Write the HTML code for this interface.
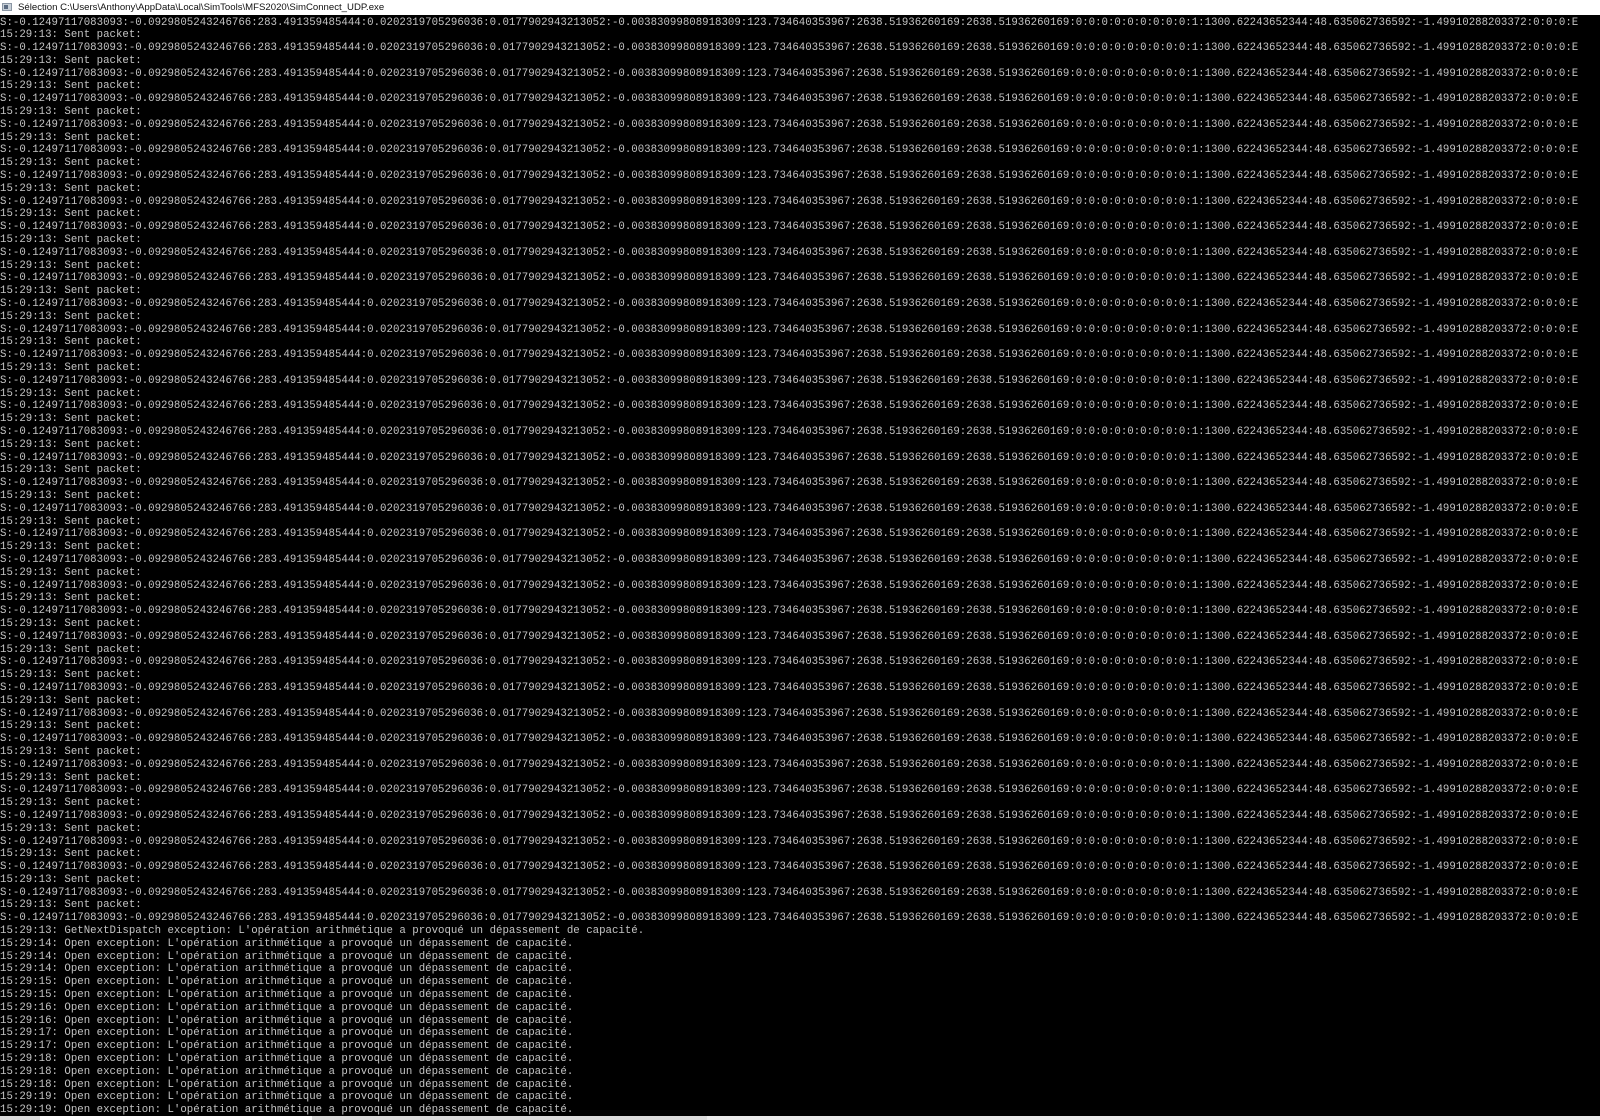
<!DOCTYPE html>
<html><head><meta charset="utf-8"><style>
html,body{margin:0;padding:0;width:1600px;height:1120px;overflow:hidden;background:#000;}
#title{position:absolute;left:0;top:0;width:1600px;height:15px;background:#fff;font-family:"Liberation Sans",sans-serif;font-size:9.6px;line-height:15px;color:#111;white-space:nowrap;}
#title .ic{position:absolute;left:2px;top:3px;width:10px;height:8px;background:#c8d0d8;border:1px solid #8a96a4;box-sizing:border-box;}
#title .ic:before{content:"";position:absolute;left:1px;top:1px;width:4px;height:4px;background:#5a6a80;}
#title span{position:absolute;left:18px;top:0;}
#con{position:absolute;left:0;top:16.5px;margin:0;font-family:"Liberation Mono",monospace;font-size:10.74px;line-height:12.8px;color:#c4c4c4;white-space:pre;}
#bot{position:absolute;left:0;top:1116px;width:1600px;height:4px;background:#dcdcdc;}
#bot i{position:absolute;left:40px;top:0;width:272px;height:4px;background:#fff;}
#bot b{position:absolute;left:707px;top:0;width:893px;height:4px;background:#ececec;}
</style></head><body>
<div id="title"><div class="ic"></div><span>Sélection C:\Users\Anthony\AppData\Local\SimTools\MFS2020\SimConnect_UDP.exe</span></div>
<pre id="con">S:-0.12497117083093:-0.0929805243246766:283.491359485444:0.0202319705296036:0.0177902943213052:-0.00383099808918309:123.734640353967:2638.51936260169:2638.51936260169:0:0:0:0:0:0:0:0:0:1:1300.62243652344:48.635062736592:-1.49910288203372:0:0:0:E
15:29:13: Sent packet:
S:-0.12497117083093:-0.0929805243246766:283.491359485444:0.0202319705296036:0.0177902943213052:-0.00383099808918309:123.734640353967:2638.51936260169:2638.51936260169:0:0:0:0:0:0:0:0:0:1:1300.62243652344:48.635062736592:-1.49910288203372:0:0:0:E
15:29:13: Sent packet:
S:-0.12497117083093:-0.0929805243246766:283.491359485444:0.0202319705296036:0.0177902943213052:-0.00383099808918309:123.734640353967:2638.51936260169:2638.51936260169:0:0:0:0:0:0:0:0:0:1:1300.62243652344:48.635062736592:-1.49910288203372:0:0:0:E
15:29:13: Sent packet:
S:-0.12497117083093:-0.0929805243246766:283.491359485444:0.0202319705296036:0.0177902943213052:-0.00383099808918309:123.734640353967:2638.51936260169:2638.51936260169:0:0:0:0:0:0:0:0:0:1:1300.62243652344:48.635062736592:-1.49910288203372:0:0:0:E
15:29:13: Sent packet:
S:-0.12497117083093:-0.0929805243246766:283.491359485444:0.0202319705296036:0.0177902943213052:-0.00383099808918309:123.734640353967:2638.51936260169:2638.51936260169:0:0:0:0:0:0:0:0:0:1:1300.62243652344:48.635062736592:-1.49910288203372:0:0:0:E
15:29:13: Sent packet:
S:-0.12497117083093:-0.0929805243246766:283.491359485444:0.0202319705296036:0.0177902943213052:-0.00383099808918309:123.734640353967:2638.51936260169:2638.51936260169:0:0:0:0:0:0:0:0:0:1:1300.62243652344:48.635062736592:-1.49910288203372:0:0:0:E
15:29:13: Sent packet:
S:-0.12497117083093:-0.0929805243246766:283.491359485444:0.0202319705296036:0.0177902943213052:-0.00383099808918309:123.734640353967:2638.51936260169:2638.51936260169:0:0:0:0:0:0:0:0:0:1:1300.62243652344:48.635062736592:-1.49910288203372:0:0:0:E
15:29:13: Sent packet:
S:-0.12497117083093:-0.0929805243246766:283.491359485444:0.0202319705296036:0.0177902943213052:-0.00383099808918309:123.734640353967:2638.51936260169:2638.51936260169:0:0:0:0:0:0:0:0:0:1:1300.62243652344:48.635062736592:-1.49910288203372:0:0:0:E
15:29:13: Sent packet:
S:-0.12497117083093:-0.0929805243246766:283.491359485444:0.0202319705296036:0.0177902943213052:-0.00383099808918309:123.734640353967:2638.51936260169:2638.51936260169:0:0:0:0:0:0:0:0:0:1:1300.62243652344:48.635062736592:-1.49910288203372:0:0:0:E
15:29:13: Sent packet:
S:-0.12497117083093:-0.0929805243246766:283.491359485444:0.0202319705296036:0.0177902943213052:-0.00383099808918309:123.734640353967:2638.51936260169:2638.51936260169:0:0:0:0:0:0:0:0:0:1:1300.62243652344:48.635062736592:-1.49910288203372:0:0:0:E
15:29:13: Sent packet:
S:-0.12497117083093:-0.0929805243246766:283.491359485444:0.0202319705296036:0.0177902943213052:-0.00383099808918309:123.734640353967:2638.51936260169:2638.51936260169:0:0:0:0:0:0:0:0:0:1:1300.62243652344:48.635062736592:-1.49910288203372:0:0:0:E
15:29:13: Sent packet:
S:-0.12497117083093:-0.0929805243246766:283.491359485444:0.0202319705296036:0.0177902943213052:-0.00383099808918309:123.734640353967:2638.51936260169:2638.51936260169:0:0:0:0:0:0:0:0:0:1:1300.62243652344:48.635062736592:-1.49910288203372:0:0:0:E
15:29:13: Sent packet:
S:-0.12497117083093:-0.0929805243246766:283.491359485444:0.0202319705296036:0.0177902943213052:-0.00383099808918309:123.734640353967:2638.51936260169:2638.51936260169:0:0:0:0:0:0:0:0:0:1:1300.62243652344:48.635062736592:-1.49910288203372:0:0:0:E
15:29:13: Sent packet:
S:-0.12497117083093:-0.0929805243246766:283.491359485444:0.0202319705296036:0.0177902943213052:-0.00383099808918309:123.734640353967:2638.51936260169:2638.51936260169:0:0:0:0:0:0:0:0:0:1:1300.62243652344:48.635062736592:-1.49910288203372:0:0:0:E
15:29:13: Sent packet:
S:-0.12497117083093:-0.0929805243246766:283.491359485444:0.0202319705296036:0.0177902943213052:-0.00383099808918309:123.734640353967:2638.51936260169:2638.51936260169:0:0:0:0:0:0:0:0:0:1:1300.62243652344:48.635062736592:-1.49910288203372:0:0:0:E
15:29:13: Sent packet:
S:-0.12497117083093:-0.0929805243246766:283.491359485444:0.0202319705296036:0.0177902943213052:-0.00383099808918309:123.734640353967:2638.51936260169:2638.51936260169:0:0:0:0:0:0:0:0:0:1:1300.62243652344:48.635062736592:-1.49910288203372:0:0:0:E
15:29:13: Sent packet:
S:-0.12497117083093:-0.0929805243246766:283.491359485444:0.0202319705296036:0.0177902943213052:-0.00383099808918309:123.734640353967:2638.51936260169:2638.51936260169:0:0:0:0:0:0:0:0:0:1:1300.62243652344:48.635062736592:-1.49910288203372:0:0:0:E
15:29:13: Sent packet:
S:-0.12497117083093:-0.0929805243246766:283.491359485444:0.0202319705296036:0.0177902943213052:-0.00383099808918309:123.734640353967:2638.51936260169:2638.51936260169:0:0:0:0:0:0:0:0:0:1:1300.62243652344:48.635062736592:-1.49910288203372:0:0:0:E
15:29:13: Sent packet:
S:-0.12497117083093:-0.0929805243246766:283.491359485444:0.0202319705296036:0.0177902943213052:-0.00383099808918309:123.734640353967:2638.51936260169:2638.51936260169:0:0:0:0:0:0:0:0:0:1:1300.62243652344:48.635062736592:-1.49910288203372:0:0:0:E
15:29:13: Sent packet:
S:-0.12497117083093:-0.0929805243246766:283.491359485444:0.0202319705296036:0.0177902943213052:-0.00383099808918309:123.734640353967:2638.51936260169:2638.51936260169:0:0:0:0:0:0:0:0:0:1:1300.62243652344:48.635062736592:-1.49910288203372:0:0:0:E
15:29:13: Sent packet:
S:-0.12497117083093:-0.0929805243246766:283.491359485444:0.0202319705296036:0.0177902943213052:-0.00383099808918309:123.734640353967:2638.51936260169:2638.51936260169:0:0:0:0:0:0:0:0:0:1:1300.62243652344:48.635062736592:-1.49910288203372:0:0:0:E
15:29:13: Sent packet:
S:-0.12497117083093:-0.0929805243246766:283.491359485444:0.0202319705296036:0.0177902943213052:-0.00383099808918309:123.734640353967:2638.51936260169:2638.51936260169:0:0:0:0:0:0:0:0:0:1:1300.62243652344:48.635062736592:-1.49910288203372:0:0:0:E
15:29:13: Sent packet:
S:-0.12497117083093:-0.0929805243246766:283.491359485444:0.0202319705296036:0.0177902943213052:-0.00383099808918309:123.734640353967:2638.51936260169:2638.51936260169:0:0:0:0:0:0:0:0:0:1:1300.62243652344:48.635062736592:-1.49910288203372:0:0:0:E
15:29:13: Sent packet:
S:-0.12497117083093:-0.0929805243246766:283.491359485444:0.0202319705296036:0.0177902943213052:-0.00383099808918309:123.734640353967:2638.51936260169:2638.51936260169:0:0:0:0:0:0:0:0:0:1:1300.62243652344:48.635062736592:-1.49910288203372:0:0:0:E
15:29:13: Sent packet:
S:-0.12497117083093:-0.0929805243246766:283.491359485444:0.0202319705296036:0.0177902943213052:-0.00383099808918309:123.734640353967:2638.51936260169:2638.51936260169:0:0:0:0:0:0:0:0:0:1:1300.62243652344:48.635062736592:-1.49910288203372:0:0:0:E
15:29:13: Sent packet:
S:-0.12497117083093:-0.0929805243246766:283.491359485444:0.0202319705296036:0.0177902943213052:-0.00383099808918309:123.734640353967:2638.51936260169:2638.51936260169:0:0:0:0:0:0:0:0:0:1:1300.62243652344:48.635062736592:-1.49910288203372:0:0:0:E
15:29:13: Sent packet:
S:-0.12497117083093:-0.0929805243246766:283.491359485444:0.0202319705296036:0.0177902943213052:-0.00383099808918309:123.734640353967:2638.51936260169:2638.51936260169:0:0:0:0:0:0:0:0:0:1:1300.62243652344:48.635062736592:-1.49910288203372:0:0:0:E
15:29:13: Sent packet:
S:-0.12497117083093:-0.0929805243246766:283.491359485444:0.0202319705296036:0.0177902943213052:-0.00383099808918309:123.734640353967:2638.51936260169:2638.51936260169:0:0:0:0:0:0:0:0:0:1:1300.62243652344:48.635062736592:-1.49910288203372:0:0:0:E
15:29:13: Sent packet:
S:-0.12497117083093:-0.0929805243246766:283.491359485444:0.0202319705296036:0.0177902943213052:-0.00383099808918309:123.734640353967:2638.51936260169:2638.51936260169:0:0:0:0:0:0:0:0:0:1:1300.62243652344:48.635062736592:-1.49910288203372:0:0:0:E
15:29:13: Sent packet:
S:-0.12497117083093:-0.0929805243246766:283.491359485444:0.0202319705296036:0.0177902943213052:-0.00383099808918309:123.734640353967:2638.51936260169:2638.51936260169:0:0:0:0:0:0:0:0:0:1:1300.62243652344:48.635062736592:-1.49910288203372:0:0:0:E
15:29:13: Sent packet:
S:-0.12497117083093:-0.0929805243246766:283.491359485444:0.0202319705296036:0.0177902943213052:-0.00383099808918309:123.734640353967:2638.51936260169:2638.51936260169:0:0:0:0:0:0:0:0:0:1:1300.62243652344:48.635062736592:-1.49910288203372:0:0:0:E
15:29:13: Sent packet:
S:-0.12497117083093:-0.0929805243246766:283.491359485444:0.0202319705296036:0.0177902943213052:-0.00383099808918309:123.734640353967:2638.51936260169:2638.51936260169:0:0:0:0:0:0:0:0:0:1:1300.62243652344:48.635062736592:-1.49910288203372:0:0:0:E
15:29:13: Sent packet:
S:-0.12497117083093:-0.0929805243246766:283.491359485444:0.0202319705296036:0.0177902943213052:-0.00383099808918309:123.734640353967:2638.51936260169:2638.51936260169:0:0:0:0:0:0:0:0:0:1:1300.62243652344:48.635062736592:-1.49910288203372:0:0:0:E
15:29:13: Sent packet:
S:-0.12497117083093:-0.0929805243246766:283.491359485444:0.0202319705296036:0.0177902943213052:-0.00383099808918309:123.734640353967:2638.51936260169:2638.51936260169:0:0:0:0:0:0:0:0:0:1:1300.62243652344:48.635062736592:-1.49910288203372:0:0:0:E
15:29:13: Sent packet:
S:-0.12497117083093:-0.0929805243246766:283.491359485444:0.0202319705296036:0.0177902943213052:-0.00383099808918309:123.734640353967:2638.51936260169:2638.51936260169:0:0:0:0:0:0:0:0:0:1:1300.62243652344:48.635062736592:-1.49910288203372:0:0:0:E
15:29:13: Sent packet:
S:-0.12497117083093:-0.0929805243246766:283.491359485444:0.0202319705296036:0.0177902943213052:-0.00383099808918309:123.734640353967:2638.51936260169:2638.51936260169:0:0:0:0:0:0:0:0:0:1:1300.62243652344:48.635062736592:-1.49910288203372:0:0:0:E
15:29:13: GetNextDispatch exception: L'opération arithmétique a provoqué un dépassement de capacité.
15:29:14: Open exception: L'opération arithmétique a provoqué un dépassement de capacité.
15:29:14: Open exception: L'opération arithmétique a provoqué un dépassement de capacité.
15:29:14: Open exception: L'opération arithmétique a provoqué un dépassement de capacité.
15:29:15: Open exception: L'opération arithmétique a provoqué un dépassement de capacité.
15:29:15: Open exception: L'opération arithmétique a provoqué un dépassement de capacité.
15:29:16: Open exception: L'opération arithmétique a provoqué un dépassement de capacité.
15:29:16: Open exception: L'opération arithmétique a provoqué un dépassement de capacité.
15:29:17: Open exception: L'opération arithmétique a provoqué un dépassement de capacité.
15:29:17: Open exception: L'opération arithmétique a provoqué un dépassement de capacité.
15:29:18: Open exception: L'opération arithmétique a provoqué un dépassement de capacité.
15:29:18: Open exception: L'opération arithmétique a provoqué un dépassement de capacité.
15:29:18: Open exception: L'opération arithmétique a provoqué un dépassement de capacité.
15:29:19: Open exception: L'opération arithmétique a provoqué un dépassement de capacité.
15:29:19: Open exception: L'opération arithmétique a provoqué un dépassement de capacité.</pre>
<div id="bot"><i></i><b></b></div>
</body></html>
